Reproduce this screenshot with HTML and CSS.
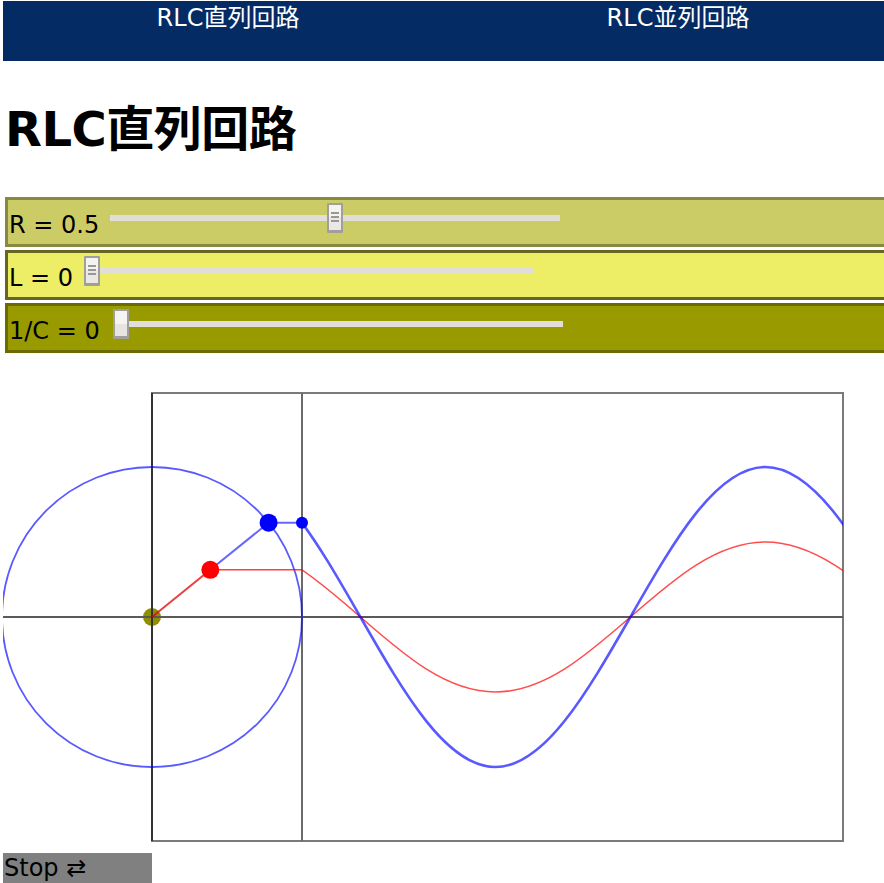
FILE: index.html
```html
<!DOCTYPE html>
<html lang="ja">
<head>
<meta charset="utf-8">
<title>RLC直列回路</title>
<link rel="stylesheet" href="styles.css">
</head>
<body>
<nav class="nav">
  <a class="nav-item">RLC直列回路</a>
  <a class="nav-item">RLC並列回路</a>
</nav>
<h1 class="title">RLC直列回路</h1>
<div class="param param-r">
  <span class="param-label">R = 0.5</span>
  <input class="slider" type="range" min="0" max="1" step="0.1" value="0.5">
</div>
<div class="param param-l">
  <span class="param-label">L = 0</span>
  <input class="slider" type="range" min="0" max="1" step="0.1" value="0">
</div>
<div class="param param-c">
  <span class="param-label">1/C = 0</span>
  <input class="slider slider-plain" type="range" min="0" max="1" step="0.1" value="0">
</div>
<svg class="plot" width="884" height="483" viewBox="0 0 884 483">
  <defs>
    <clipPath id="waveClip"><rect x="299" y="0" width="541" height="483"/></clipPath>
  </defs>
  <circle class="dot-origin" cx="149" cy="247" r="9"/>
  <rect class="frame" x="149" y="23" width="691" height="448"/>
  <line class="axis-x" x1="0" y1="247" x2="840" y2="247"/>
  <line class="axis-y" x1="149" y1="23" x2="149" y2="471"/>
  <line class="axis-t" x1="299" y1="23" x2="299" y2="471"/>
  <circle class="circle" cx="149" cy="247" r="150"/>
  <g clip-path="url(#waveClip)">
    <path class="wave-red" d="M222.4,172 c48.86,0 90.97,36.58 135,75 c44.03,38.42 86.14,75 135,75 c48.86,0 90.97,-36.58 135,-75 c44.03,-38.42 86.14,-75 135,-75 c48.86,0 90.97,36.58 135,75"/>
    <path class="wave-blue" d="M222.4,97 c48.86,0 90.97,73.16 135,150 c44.03,76.85 86.14,150 135,150 c48.86,0 90.97,-73.16 135,-150 c44.03,-76.85 86.14,-150 135,-150 c48.86,0 90.97,73.16 135,150"/>
  </g>
  <line class="ph-red" x1="149" y1="247" x2="207.3" y2="199.8"/>
  <line class="ph-red-h" x1="207.3" y1="199.8" x2="299" y2="199.8"/>
  <line class="ph-blue" x1="207.3" y1="199.8" x2="265.6" y2="152.7"/>
  <line class="ph-blue" x1="265.6" y1="152.7" x2="299" y2="152.7"/>
  <circle class="dot-red" cx="207.3" cy="199.8" r="9"/>
  <circle class="dot-blue" cx="265.6" cy="152.7" r="9"/>
  <circle class="dot-blue" cx="299" cy="152.7" r="6"/>
</svg>
<button class="stop" type="button">Stop ⇄</button>
</body>
</html>
```
FILE: styles.css
```css
html {
  overflow: hidden;
}
body {
  margin: 0;
  padding: 1px 0 0 3px;
  font-family: "DejaVu Sans", "Noto Sans CJK JP", sans-serif;
  font-size: 24px;
  color: #000;
  background: #fff;
}
.nav {
  display: flex;
  width: 900px;
  height: 60px;
  background: #042b64;
}
.nav-item {
  width: 450px;
  flex: none;
  text-align: center;
  color: #fff;
  font-size: 24px;
  line-height: 34px;
  text-decoration: none;
}
.title {
  margin: 32px 0 32px 2px;
  font-size: 48px;
  line-height: 72px;
  font-weight: bold;
  letter-spacing: -0.5px;
}
.param {
  display: flex;
  align-items: flex-start;
  width: 900px;
  height: 44px;
  margin: 0 0 3px 2px;
  border: 3px solid;
}
.param-r {
  background: #cccc66;
  border-color: #888844;
}
.param-l {
  background: #eeee66;
  border-color: #666622;
}
.param-c {
  background: #999900;
  border-color: #6b6b00;
}
.param-label {
  padding: 6px 0 0 1px;
  line-height: 38px;
  white-space: pre;
}
.slider {
  -webkit-appearance: none;
  appearance: none;
  width: 450px;
  height: 30px;
  margin: 3px 0 0 11px;
  padding: 0;
  background: transparent;
}
.param-c .slider {
  margin-left: 13px;
}
.slider::-webkit-slider-runnable-track {
  height: 6px;
  background: #e1ddd9;
  border: none;
}
.slider::-webkit-slider-thumb {
  -webkit-appearance: none;
  appearance: none;
  box-sizing: border-box;
  width: 16px;
  height: 30px;
  margin-top: -12px;
  border: 2px solid #a19f9d;
  border-bottom-width: 3px;
  border-radius: 1px;
  background:
    linear-gradient(#9a9896, #9a9896) center 7px / 8px 2px no-repeat,
    linear-gradient(#9a9896, #9a9896) center 11px / 8px 2px no-repeat,
    linear-gradient(#9a9896, #9a9896) center 15px / 8px 2px no-repeat,
    linear-gradient(#f4f3f1 50%, #ebe9e6 50%);
}
.slider-plain::-webkit-slider-thumb {
  background: linear-gradient(#f5f4f2 50%, #e7e4e1 50%);
}
.plot {
  display: block;
  margin-top: 17px;
  overflow: hidden;
}
.frame {
  fill: none;
  stroke: #7a7a7a;
  stroke-width: 2;
}
.axis-x {
  stroke: #5a5a5a;
  stroke-width: 2;
}
.axis-y {
  stroke: #333;
  stroke-width: 2;
}
.axis-t {
  stroke: #6a6a6a;
  stroke-width: 2;
}
.circle {
  fill: none;
  stroke: #0000ff;
  stroke-opacity: 0.65;
  stroke-width: 1.8;
}
.wave-blue {
  fill: none;
  stroke: #0000ff;
  stroke-opacity: 0.65;
  stroke-width: 2.6;
}
.wave-red {
  fill: none;
  stroke: #ff0000;
  stroke-opacity: 0.7;
  stroke-width: 1.5;
}
.ph-red {
  stroke: #e00000;
  stroke-opacity: 0.75;
  stroke-width: 2;
}
.ph-red-h {
  stroke: #ff0000;
  stroke-opacity: 0.75;
  stroke-width: 1.5;
}
.ph-blue {
  stroke: #0000ff;
  stroke-opacity: 0.6;
  stroke-width: 2;
}
.dot-origin {
  fill: #8f8f00;
}
.dot-red {
  fill: #ff0000;
}
.dot-blue {
  fill: #0000ff;
}
.stop {
  display: block;
  width: 149px;
  height: 30px;
  margin: 0;
  padding: 0 0 0 1px;
  border: none;
  border-radius: 0;
  background: #808080;
  color: #000;
  font-family: "DejaVu Sans", "Noto Sans CJK JP", sans-serif;
  font-size: 24px;
  line-height: 30px;
  text-align: left;
}
```
